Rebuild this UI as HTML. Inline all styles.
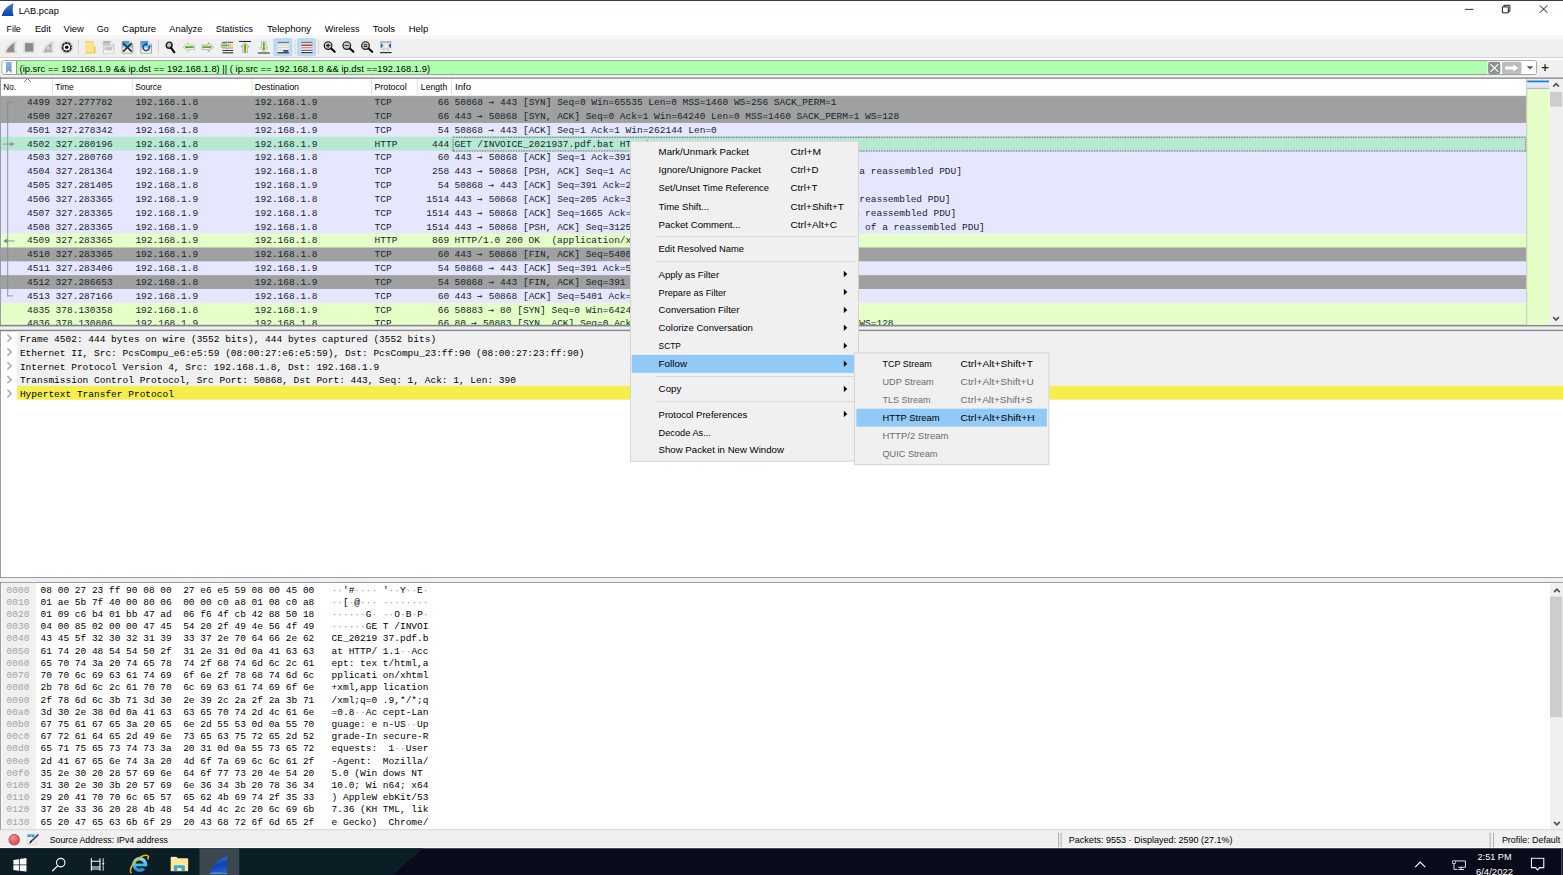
<!DOCTYPE html>
<html lang="en"><head><meta charset="utf-8"><title>LAB.pcap</title>
<style>
html,body{margin:0;padding:0;width:1563px;height:875px;overflow:hidden;background:#f0f0f0}
#r{position:absolute;left:0;top:0;width:1920px;height:1075px;transform:scale(0.81406);transform-origin:0 0;background:#f0f0f0;overflow:hidden;font-family:"Liberation Sans", sans-serif;font-size:12px;color:#000}
#r div{box-sizing:border-box}
</style></head><body><div id="r">
<div style="position:absolute;left:0.00px;top:0.00px;width:1920.00px;height:45.00px;background:#ffffff;"></div>
<div style="position:absolute;left:0.00px;top:0.00px;width:1920.00px;height:1.30px;background:#0a0a2c;"></div>
<svg style="position:absolute;left:2.20px;top:3.00px;" width="17" height="17.5" viewBox="0 0 17 16"><path d="M0.2 15.9 C1.6 9.3 6.6 2.8 14.6 0.2 C13.4 5 13.2 11 14.6 15.9 Z" fill="url(#fg)"/><defs><linearGradient id="fg" x1="0" y1="0" x2="0" y2="1"><stop offset="0" stop-color="#3c7fdc"/><stop offset="1" stop-color="#0a3fa8"/></linearGradient></defs></svg>
<div style="position:absolute;top:4.54px;line-height:17px;font-size:12px;color:#000;white-space:pre;left:23.30px;transform-origin:0 50%;transform:scaleX(0.9464);">LAB.pcap</div>
<svg style="position:absolute;left:1794.00px;top:1.00px;" width="120" height="22" viewBox="0 0 120 22"><path d="M5.5 10.5h10.5" stroke="#000" stroke-width="1" fill="none"/><path d="M51.500 7.500h7.300v7.300h-7.300z M53.500 7.500v-2h7.300v7.300h-2" stroke="#000" stroke-width="1.100" fill="none"/><path d="M97.500 5.500l9.300 9.300M106.800 5.500l-9.300 9.300" stroke="#000" stroke-width="1.100" fill="none"/></svg>
<div style="position:absolute;top:27.04px;line-height:17px;font-size:12px;color:#000;white-space:pre;left:8.35px;transform-origin:0 50%;transform:scaleX(0.9081);">File</div>
<div style="position:absolute;top:27.04px;line-height:17px;font-size:12px;color:#000;white-space:pre;left:42.50px;transform-origin:0 50%;transform:scaleX(0.9382);">Edit</div>
<div style="position:absolute;top:27.04px;line-height:17px;font-size:12px;color:#000;white-space:pre;left:78.13px;transform-origin:0 50%;transform:scaleX(0.9714);">View</div>
<div style="position:absolute;top:27.04px;line-height:17px;font-size:12px;color:#000;white-space:pre;left:119.28px;transform-origin:0 50%;transform:scaleX(0.9204);">Go</div>
<div style="position:absolute;top:27.04px;line-height:17px;font-size:12px;color:#000;white-space:pre;left:150.36px;transform-origin:0 50%;transform:scaleX(0.9809);">Capture</div>
<div style="position:absolute;top:27.04px;line-height:17px;font-size:12px;color:#000;white-space:pre;left:208.34px;transform-origin:0 50%;transform:scaleX(0.9522);">Analyze</div>
<div style="position:absolute;top:27.04px;line-height:17px;font-size:12px;color:#000;white-space:pre;left:265.46px;transform-origin:0 50%;transform:scaleX(0.9517);">Statistics</div>
<div style="position:absolute;top:27.04px;line-height:17px;font-size:12px;color:#000;white-space:pre;left:327.74px;transform-origin:0 50%;transform:scaleX(0.9900);">Telephony</div>
<div style="position:absolute;top:27.04px;line-height:17px;font-size:12px;color:#000;white-space:pre;left:398.50px;transform-origin:0 50%;transform:scaleX(0.9237);">Wireless</div>
<div style="position:absolute;top:27.04px;line-height:17px;font-size:12px;color:#000;white-space:pre;left:457.95px;transform-origin:0 50%;transform:scaleX(0.9734);">Tools</div>
<div style="position:absolute;top:27.04px;line-height:17px;font-size:12px;color:#000;white-space:pre;left:501.93px;transform-origin:0 50%;transform:scaleX(0.9703);">Help</div>
<div style="position:absolute;left:0.00px;top:44.40px;width:1920.00px;height:26.60px;background:#f0f0f0;"></div>
<div style="position:absolute;left:0.00px;top:45.30px;width:1920.00px;height:1.40px;background:#fafafa;"></div>
<div style="position:absolute;left:0.00px;top:69.85px;width:1920.00px;height:1.30px;background:#bfbfbf;"></div>
<div style="position:absolute;left:0.00px;top:71.20px;width:1920.00px;height:2.50px;background:#ffffff;"></div>
<div style="position:absolute;left:336.30px;top:47.00px;width:23.00px;height:22.00px;background:#bcdcf4;border:1px solid #a9d1f5;border-radius:2px;"></div>
<div style="position:absolute;left:365.00px;top:47.00px;width:23.40px;height:22.00px;background:#bcdcf4;border:1px solid #a9d1f5;border-radius:2px;"></div>
<svg style="position:absolute;left:5.20px;top:50.00px;" width="16" height="16" viewBox="0 0 16 16"><path d="M0 15.8 C1.5 9 7 2.6 13.8 0.2 L15.8 0 C14.4 5 14.4 11 15.8 15.8 Z" fill="#dcdcdc"/><path d="M2.6 14.2 C4 9 8 4.6 13 2.4 C12 6 12 10.5 13 14.2 Z" fill="#8c8c8c"/></svg>
<svg style="position:absolute;left:28.00px;top:50.00px;" width="16" height="16" viewBox="0 0 16 16"><rect x="0.8" y="1.2" width="14" height="14" fill="#dcdcdc"/><rect x="2.8" y="3" width="10" height="10.4" fill="#8a8a8a"/></svg>
<svg style="position:absolute;left:51.00px;top:50.00px;" width="16" height="16" viewBox="0 0 16 16"><path d="M0 15.8 C1.5 9 7 2.6 13.8 0.2 L15.8 0 C14.4 5 14.4 11 15.8 15.8 Z" fill="#e2e2e2"/><path d="M2.6 14.2 C4 9 8 4.6 13 2.4 C12 6 12 10.5 13 14.2 Z" fill="#b0b0b0"/><circle cx="8.6" cy="9.4" r="2.6" fill="#eee" stroke="#a8a8a8" stroke-width="1"/><path d="M7.6 9.6l1 1l1.8-3" stroke="#999" stroke-width="0.9" fill="none"/></svg>
<svg style="position:absolute;left:74.00px;top:50.00px;" width="16" height="16" viewBox="0 0 16 16"><circle cx="8" cy="8" r="7.500" fill="#e4e4e4" stroke="#c2c2c2" stroke-width="0.900"/><circle cx="8" cy="8" r="5.200" fill="#fff" stroke="#222" stroke-width="2.300"/><circle cx="8" cy="8" r="5.600" fill="none" stroke="#f2f2f2" stroke-width="1.300" stroke-dasharray="0.900 3.500"/><circle cx="8" cy="8" r="2.200" fill="#0a0a0a"/></svg>
<div style="position:absolute;left:95.80px;top:49.00px;width:1.00px;height:18.00px;background:#d0d0d0;"></div>
<svg style="position:absolute;left:103.40px;top:50.00px;" width="16" height="16" viewBox="0 0 16 16"><path d="M1.6 0.4h10.8v6.8h1.8v8.6h-12.6z" fill="#fde28e"/><path d="M12.4 7.2h1.8v8.6h-12.6v-1.2h11v-7.4z" fill="#f0c648"/><path d="M1.6 0.4h10.8v0.9h-10.8z" fill="#f3cf62"/></svg>
<svg style="position:absolute;left:126.00px;top:50.00px;" width="16" height="16" viewBox="0 0 16 16"><defs><linearGradient id="g6" x1="0" y1="0" x2="0" y2="1"><stop offset="0" stop-color="#a9a9a9"/><stop offset="0.5" stop-color="#e4e4e4"/><stop offset="1" stop-color="#fbfbfb"/></linearGradient></defs><path d="M1 0.4h8.6l4.4 4.4v10.8h-13z" fill="url(#g6)" stroke="#bdbdbd" stroke-width="0.9"/><path d="M9.6 0.4v4.4h4.4z" fill="#f4f4f4"/><path d="M3.2 11.5v-3M5.5 8.5h1.6v3h-1.6zM9 8.5h1.6v3h-1.6z" stroke="#b0b0b0" stroke-width="1.200" fill="none"/></svg>
<svg style="position:absolute;left:149.00px;top:50.00px;" width="16" height="16" viewBox="0 0 16 16"><defs><linearGradient id="g7" x1="0" y1="0" x2="0" y2="1"><stop offset="0" stop-color="#2f9be8"/><stop offset="0.45" stop-color="#7cc0ea"/><stop offset="0.62" stop-color="#f2f3e4"/><stop offset="1" stop-color="#f8f8e8"/></linearGradient></defs><path d="M1 0.5h8.8l4.2 4.2v10.8h-13z" fill="url(#g7)" stroke="#8e8e84" stroke-width="1"/><path d="M9.8 0.5v4.2h4.2z" fill="#e9f2f6"/><path d="M2.2 3l10.6 10.4M12.8 3l-10.6 10.4" stroke="#2c2f33" stroke-width="2.1" fill="none"/></svg>
<svg style="position:absolute;left:172.00px;top:50.00px;" width="16" height="16" viewBox="0 0 16 16"><defs><linearGradient id="g8" x1="0" y1="0" x2="0" y2="1"><stop offset="0" stop-color="#2f9be8"/><stop offset="0.45" stop-color="#7cc0ea"/><stop offset="0.62" stop-color="#f2f3e4"/><stop offset="1" stop-color="#f8f8e8"/></linearGradient></defs><path d="M1 0.5h8.8l4.2 4.2v10.8h-13z" fill="url(#g8)" stroke="#8e8e84" stroke-width="1"/><path d="M9.8 0.5v4.2h4.2z" fill="#e9f2f6"/><path d="M10.8 6.2a3.9 3.9 0 1 1 -3.4 -1.9" stroke="#1c4f9e" stroke-width="2" fill="none"/><path d="M6.6 2l3.4 2.3l-3.4 2.3z" fill="#1c4f9e"/></svg>
<div style="position:absolute;left:194.10px;top:49.00px;width:1.00px;height:18.00px;background:#d0d0d0;"></div>
<svg style="position:absolute;left:201.00px;top:50.00px;" width="16" height="16" viewBox="0 0 16 16"><circle cx="6.800" cy="5.600" r="3.600" fill="#bdbdbd" stroke="#1e1e1e" stroke-width="1.800"/><path d="M5 3.8a2.6 2.6 0 0 1 3.2 0" stroke="#e8e8e8" stroke-width="1" fill="none"/><path d="M9 8.6l4.2 5.6" stroke="#0a0a0a" stroke-width="2.6" stroke-linecap="round"/></svg>
<svg style="position:absolute;left:224.00px;top:50.00px;" width="16" height="16" viewBox="0 0 16 16"><path d="M1 8l6.2-5.6v3h7.6v5.2h-7.6v3z" fill="#fff" stroke="#b4b4b4" stroke-width="1"/><path d="M4.4 8h8.6" stroke="#5fb000" stroke-width="2.2" stroke-linecap="round"/><path d="M3.2 8l3-2.2v4.4z" fill="#5fb000"/></svg>
<svg style="position:absolute;left:247.00px;top:50.00px;" width="16" height="16" viewBox="0 0 16 16"><path d="M15 8l-6.2-5.6v3h-7.6v5.2h7.6v3z" fill="#fff" stroke="#9a9a9a" stroke-width="1"/><path d="M3 8h8.6" stroke="#5fb000" stroke-width="2.2" stroke-linecap="round"/><path d="M12.8 8l-3-2.2v4.4z" fill="#5fb000"/></svg>
<svg style="position:absolute;left:270.50px;top:50.00px;" width="16" height="16" viewBox="0 0 16 16"><path d="M2 2h13.4" stroke="#6b6b6b" stroke-width="1.4"/><path d="M10 4.2h5.4v3.2h-5.4z" fill="#ffe24a"/><path d="M2 9h13.4" stroke="#8a8a8a" stroke-width="1"/><path d="M2.4 12h13M2.4 15h13" stroke="#333" stroke-width="1.4"/><path d="M0.6 3.6h7v-2.4l5 4.6l-5 4.6v-2.4h-7z" fill="#fff" stroke="#8e8e8e" stroke-width="0.9"/><path d="M2.4 5.8h7" stroke="#5fb000" stroke-width="2.2" stroke-linecap="round"/></svg>
<svg style="position:absolute;left:293.00px;top:50.00px;" width="16" height="16" viewBox="0 0 16 16"><path d="M0.6 0.8h14.8" stroke="#2e2e2e" stroke-width="1.4"/><path d="M8 2l5 5.4h-2.2v7.4h-5.6v-7.4h-2.2z" fill="#fff" stroke="#8e8e8e" stroke-width="0.9"/><path d="M8 6v7" stroke="#5fb000" stroke-width="2.4" stroke-linecap="round"/><path d="M8 3.8l2.4 3h-4.8z" fill="#5fb000"/></svg>
<svg style="position:absolute;left:316.00px;top:50.00px;" width="16" height="16" viewBox="0 0 16 16"><path d="M0.6 15.3h14.8" stroke="#2e2e2e" stroke-width="1.4"/><path d="M8 14l5-5.4h-2.2v-7.4h-5.6v7.4h-2.2z" fill="#fff" stroke="#a6a6a6" stroke-width="0.9"/><path d="M8 3v7" stroke="#5fb000" stroke-width="2.4" stroke-linecap="round"/><path d="M8 12.2l2.4-3h-4.8z" fill="#5fb000"/></svg>
<svg style="position:absolute;left:339.70px;top:50.00px;" width="16" height="16" viewBox="0 0 16 16"><rect x="1" y="1.6" width="14" height="13" fill="#f4f4ee"/><path d="M1 2.2h14" stroke="#6d7f96" stroke-width="1.6"/><path d="M1 5.4h14M1 8.4h14M1 11.4h14" stroke="#c9c9c4" stroke-width="1"/><path d="M1 15h14" stroke="#1e1e1e" stroke-width="1.5"/><path d="M7.2 11.4h7.8l-2 3h-3.8z" fill="#2a5ea8"/></svg>
<div style="position:absolute;left:361.50px;top:49.00px;width:1.00px;height:18.00px;background:#d0d0d0;"></div>
<svg style="position:absolute;left:368.60px;top:50.00px;" width="16" height="16" viewBox="0 0 16 16"><rect x="1" y="1.4" width="14" height="14" fill="#f3f4ee"/><path d="M1 2.2h14" stroke="#7e7e7e" stroke-width="1.7"/><path d="M1 5.6h14" stroke="#ee2c2c" stroke-width="1.6"/><path d="M1 8.6h14" stroke="#6f8fc0" stroke-width="1.4"/><path d="M1 11.9h14" stroke="#8a5a96" stroke-width="1.4"/><path d="M1 14.7h14" stroke="#3c3c3c" stroke-width="1.5"/></svg>
<div style="position:absolute;left:391.40px;top:49.00px;width:1.00px;height:18.00px;background:#d0d0d0;"></div>
<svg style="position:absolute;left:397.00px;top:50.00px;" width="16" height="16" viewBox="0 0 16 16"><circle cx="6" cy="6" r="4.7" fill="#c9c9c9" stroke="#1a1a1a" stroke-width="1.5"/><path d="M9.8 9.6l4.4 4" stroke="#0a0a0a" stroke-width="2.6" stroke-linecap="round"/><path d="M6 3.4v5.2M3.4 6h5.2" stroke="#111" stroke-width="1.3"/></svg>
<svg style="position:absolute;left:420.00px;top:50.00px;" width="16" height="16" viewBox="0 0 16 16"><circle cx="6" cy="6" r="4.7" fill="#c9c9c9" stroke="#1a1a1a" stroke-width="1.5"/><path d="M9.8 9.6l4.4 4" stroke="#0a0a0a" stroke-width="2.6" stroke-linecap="round"/><path d="M3.6 6h4.8" stroke="#333" stroke-width="1.3"/></svg>
<svg style="position:absolute;left:443.00px;top:50.00px;" width="16" height="16" viewBox="0 0 16 16"><circle cx="6" cy="6" r="4.7" fill="#c9c9c9" stroke="#1a1a1a" stroke-width="1.5"/><path d="M9.8 9.6l4.4 4" stroke="#0a0a0a" stroke-width="2.6" stroke-linecap="round"/><path d="M3.8 4.9h4.4M3.8 7.1h4.4" stroke="#222" stroke-width="1.3"/></svg>
<svg style="position:absolute;left:466.00px;top:50.00px;" width="16" height="16" viewBox="0 0 16 16"><rect x="1" y="1.5" width="14" height="13" fill="#f4f4ee"/><path d="M1 1.6h14" stroke="#7c7c7c" stroke-width="1.5"/><path d="M1 14.6h14" stroke="#222" stroke-width="1.5"/><path d="M1 10.4h14M5.6 2v12.5M10.4 2v12.5" stroke="#c4c4be" stroke-width="1"/><path d="M1.6 3.2c3.6 0.6 3.6 5.2 0 5.8zM14.4 3.2c-3.6 0.6-3.6 5.2 0 5.8z" fill="#2b62ad"/></svg>
<div style="position:absolute;left:2.00px;top:73.70px;width:1886.00px;height:18.10px;background:#afffaf;border:1px solid #8a8a8a;border-radius:3.5px;background-clip:padding-box;box-shadow:0 0 0 0 #888;"></div>
<div style="position:absolute;left:3.00px;top:75.00px;width:17.50px;height:16.00px;background:#ffffff;border-radius:2.5px 0 0 2.5px;border-right:1px solid #8a8a8a;"></div>
<div style="position:absolute;left:19.80px;top:75.00px;width:1.00px;height:16.00px;background:#8a8a8a;"></div>
<svg style="position:absolute;left:7.30px;top:76.30px;" width="8" height="15" viewBox="0 0 8 15"><defs><linearGradient id="bk" x1="0" y1="0" x2="0" y2="1"><stop offset="0" stop-color="#8ab4e2"/><stop offset="1" stop-color="#6596d2"/></linearGradient></defs><path d="M0.200 0h7.100v14l-3.550-3.300l-3.550 3.300z" fill="url(#bk)"/></svg>
<div style="position:absolute;top:77.09px;line-height:15px;font-size:11px;color:#000;white-space:pre;left:24.32px;transform-origin:0 50%;transform:scaleX(1.0473);">(ip.src == 192.168.1.9 &amp;&amp; ip.dst == 192.168.1.8) || ( ip.src == 192.168.1.8 &amp;&amp; ip.dst ==192.168.1.9)</div>
<div style="position:absolute;left:1827.00px;top:75.00px;width:60.00px;height:16.00px;background:#ffffff;border-radius:0 2px 2px 0;"></div>
<div style="position:absolute;left:1827.50px;top:75.50px;width:15.50px;height:15.00px;background:#8e908c;border-radius:2.5px;"></div>
<svg style="position:absolute;left:1827.50px;top:75.50px;" width="15.5" height="15" viewBox="0 0 15.5 15"><path d="M3 2.8l9.5 9.5M12.5 2.8l-9.5 9.5" stroke="#fff" stroke-width="1.4" fill="none"/></svg>
<div style="position:absolute;left:1845.00px;top:75.50px;width:24.00px;height:15.00px;background:#bcbcbc;border-radius:2px;"></div>
<svg style="position:absolute;left:1845.00px;top:75.50px;" width="24" height="15" viewBox="0 0 24 15"><path d="M4 5.7h10v-2.6l6 4.4l-6 4.4v-2.6h-10z" fill="#fff"/></svg>
<svg style="position:absolute;left:1875.00px;top:80.00px;" width="10" height="6" viewBox="0 0 10 6"><path d="M0.500 1.300h8l-4 4.200z" fill="#555"/></svg>
<svg style="position:absolute;left:1892.00px;top:77.00px;" width="12" height="12" viewBox="0 0 12 12"><path d="M6 2v8.200M1.900 6.100h8.200" stroke="#222" stroke-width="1.600" fill="none"/></svg>
<div style="position:absolute;left:0.00px;top:95.10px;width:1920.00px;height:305.00px;background:#ffffff;"></div>
<div style="position:absolute;top:100.39px;line-height:15px;font-size:11px;color:#000;white-space:pre;left:4.05px;transform-origin:0 50%;transform:scaleX(0.9110);">No.</div>
<div style="position:absolute;top:100.39px;line-height:15px;font-size:11px;color:#000;white-space:pre;left:68.30px;transform-origin:0 50%;transform:scaleX(0.9348);">Time</div>
<div style="position:absolute;top:100.39px;line-height:15px;font-size:11px;color:#000;white-space:pre;left:166.33px;transform-origin:0 50%;transform:scaleX(0.9374);">Source</div>
<div style="position:absolute;top:100.39px;line-height:15px;font-size:11px;color:#000;white-space:pre;left:313.00px;transform-origin:0 50%;transform:scaleX(0.9864);">Destination</div>
<div style="position:absolute;top:100.39px;line-height:15px;font-size:11px;color:#000;white-space:pre;left:460.16px;transform-origin:0 50%;transform:scaleX(0.9801);">Protocol</div>
<div style="position:absolute;top:100.39px;line-height:15px;font-size:11px;color:#000;white-space:pre;left:516.55px;transform-origin:0 50%;transform:scaleX(0.9599);">Length</div>
<div style="position:absolute;top:100.39px;line-height:15px;font-size:11px;color:#000;white-space:pre;left:558.56px;transform-origin:0 50%;transform:scaleX(1.0705);">Info</div>
<div style="position:absolute;left:63.62px;top:96.00px;width:1.00px;height:21.00px;background:#dadada;"></div>
<div style="position:absolute;left:162.14px;top:96.00px;width:1.00px;height:21.00px;background:#dadada;"></div>
<div style="position:absolute;left:309.31px;top:96.00px;width:1.00px;height:21.00px;background:#dadada;"></div>
<div style="position:absolute;left:455.98px;top:96.00px;width:1.00px;height:21.00px;background:#dadada;"></div>
<div style="position:absolute;left:512.36px;top:96.00px;width:1.00px;height:21.00px;background:#dadada;"></div>
<div style="position:absolute;left:554.00px;top:96.00px;width:1.00px;height:21.00px;background:#dadada;"></div>
<svg style="position:absolute;left:29.00px;top:94.50px;" width="10" height="7" viewBox="0 0 10 7"><path d="M0.8 5.6l4-4.2l4 4.2" stroke="#555" stroke-width="1" fill="none"/></svg>
<div style="position:absolute;left:0;top:94px;width:1920px;height:305.5px;overflow:hidden">
<div style="position:absolute;left:1.30px;top:23.45px;width:1873.70px;height:17.70px;background:#a0a0a0;"></div>
<div style="position:absolute;top:24.04px;line-height:16px;font-size:11.68px;color:#12272e;white-space:pre;right:1858.70px;font-family:'Liberation Mono', monospace;">4499</div>
<div style="position:absolute;top:24.04px;line-height:16px;font-size:11.68px;color:#12272e;white-space:pre;left:68.30px;font-family:'Liberation Mono', monospace;">327.277782</div>
<div style="position:absolute;top:24.04px;line-height:16px;font-size:11.68px;color:#12272e;white-space:pre;left:166.33px;font-family:'Liberation Mono', monospace;">192.168.1.8</div>
<div style="position:absolute;top:24.04px;line-height:16px;font-size:11.68px;color:#12272e;white-space:pre;left:313.00px;font-family:'Liberation Mono', monospace;">192.168.1.9</div>
<div style="position:absolute;top:24.04px;line-height:16px;font-size:11.68px;color:#12272e;white-space:pre;left:460.16px;font-family:'Liberation Mono', monospace;">TCP</div>
<div style="position:absolute;top:24.04px;line-height:16px;font-size:11.68px;color:#12272e;white-space:pre;right:1368.32px;font-family:'Liberation Mono', monospace;">66</div>
<div style="position:absolute;top:24.04px;line-height:16px;font-size:11.68px;color:#12272e;white-space:pre;left:558.31px;font-family:'Liberation Mono', monospace;">50868 <span style="display:inline-block;width:1ch;font-family:'DejaVu Sans Mono',monospace;line-height:0;position:relative;top:-0.1px;text-indent:-0.3px">→</span> 443 [SYN] Seq=0 Win=65535 Len=0 MSS=1460 WS=256 SACK_PERM=1</div>
<div style="position:absolute;left:1.30px;top:40.45px;width:1873.70px;height:17.70px;background:#a0a0a0;"></div>
<div style="position:absolute;top:41.04px;line-height:16px;font-size:11.68px;color:#12272e;white-space:pre;right:1858.70px;font-family:'Liberation Mono', monospace;">4500</div>
<div style="position:absolute;top:41.04px;line-height:16px;font-size:11.68px;color:#12272e;white-space:pre;left:68.30px;font-family:'Liberation Mono', monospace;">327.278267</div>
<div style="position:absolute;top:41.04px;line-height:16px;font-size:11.68px;color:#12272e;white-space:pre;left:166.33px;font-family:'Liberation Mono', monospace;">192.168.1.9</div>
<div style="position:absolute;top:41.04px;line-height:16px;font-size:11.68px;color:#12272e;white-space:pre;left:313.00px;font-family:'Liberation Mono', monospace;">192.168.1.8</div>
<div style="position:absolute;top:41.04px;line-height:16px;font-size:11.68px;color:#12272e;white-space:pre;left:460.16px;font-family:'Liberation Mono', monospace;">TCP</div>
<div style="position:absolute;top:41.04px;line-height:16px;font-size:11.68px;color:#12272e;white-space:pre;right:1368.32px;font-family:'Liberation Mono', monospace;">66</div>
<div style="position:absolute;top:41.04px;line-height:16px;font-size:11.68px;color:#12272e;white-space:pre;left:558.31px;font-family:'Liberation Mono', monospace;">443 <span style="display:inline-block;width:1ch;font-family:'DejaVu Sans Mono',monospace;line-height:0;position:relative;top:-0.1px;text-indent:-0.3px">→</span> 50868 [SYN, ACK] Seq=0 Ack=1 Win=64240 Len=0 MSS=1460 SACK_PERM=1 WS=128</div>
<div style="position:absolute;left:1.30px;top:57.45px;width:1873.70px;height:17.70px;background:#e7e6ff;"></div>
<div style="position:absolute;top:58.04px;line-height:16px;font-size:11.68px;color:#12272e;white-space:pre;right:1858.70px;font-family:'Liberation Mono', monospace;">4501</div>
<div style="position:absolute;top:58.04px;line-height:16px;font-size:11.68px;color:#12272e;white-space:pre;left:68.30px;font-family:'Liberation Mono', monospace;">327.278342</div>
<div style="position:absolute;top:58.04px;line-height:16px;font-size:11.68px;color:#12272e;white-space:pre;left:166.33px;font-family:'Liberation Mono', monospace;">192.168.1.8</div>
<div style="position:absolute;top:58.04px;line-height:16px;font-size:11.68px;color:#12272e;white-space:pre;left:313.00px;font-family:'Liberation Mono', monospace;">192.168.1.9</div>
<div style="position:absolute;top:58.04px;line-height:16px;font-size:11.68px;color:#12272e;white-space:pre;left:460.16px;font-family:'Liberation Mono', monospace;">TCP</div>
<div style="position:absolute;top:58.04px;line-height:16px;font-size:11.68px;color:#12272e;white-space:pre;right:1368.32px;font-family:'Liberation Mono', monospace;">54</div>
<div style="position:absolute;top:58.04px;line-height:16px;font-size:11.68px;color:#12272e;white-space:pre;left:558.31px;font-family:'Liberation Mono', monospace;">50868 <span style="display:inline-block;width:1ch;font-family:'DejaVu Sans Mono',monospace;line-height:0;position:relative;top:-0.1px;text-indent:-0.3px">→</span> 443 [ACK] Seq=1 Ack=1 Win=262144 Len=0</div>
<div style="position:absolute;left:1.30px;top:74.45px;width:1873.70px;height:17.70px;background:#b6e8d2;"></div>
<div style="position:absolute;top:75.04px;line-height:16px;font-size:11.68px;color:#12272e;white-space:pre;right:1858.70px;font-family:'Liberation Mono', monospace;">4502</div>
<div style="position:absolute;top:75.04px;line-height:16px;font-size:11.68px;color:#12272e;white-space:pre;left:68.30px;font-family:'Liberation Mono', monospace;">327.280196</div>
<div style="position:absolute;top:75.04px;line-height:16px;font-size:11.68px;color:#12272e;white-space:pre;left:166.33px;font-family:'Liberation Mono', monospace;">192.168.1.8</div>
<div style="position:absolute;top:75.04px;line-height:16px;font-size:11.68px;color:#12272e;white-space:pre;left:313.00px;font-family:'Liberation Mono', monospace;">192.168.1.9</div>
<div style="position:absolute;top:75.04px;line-height:16px;font-size:11.68px;color:#12272e;white-space:pre;left:460.16px;font-family:'Liberation Mono', monospace;">HTTP</div>
<div style="position:absolute;top:75.04px;line-height:16px;font-size:11.68px;color:#12272e;white-space:pre;right:1368.32px;font-family:'Liberation Mono', monospace;">444</div>
<div style="position:absolute;top:75.04px;line-height:16px;font-size:11.68px;color:#12272e;white-space:pre;left:558.31px;font-family:'Liberation Mono', monospace;">GET /INVOICE_2021937.pdf.bat HTTP/1.1 </div>
<div style="position:absolute;left:1.30px;top:91.45px;width:1873.70px;height:17.70px;background:#e7e6ff;"></div>
<div style="position:absolute;top:92.04px;line-height:16px;font-size:11.68px;color:#12272e;white-space:pre;right:1858.70px;font-family:'Liberation Mono', monospace;">4503</div>
<div style="position:absolute;top:92.04px;line-height:16px;font-size:11.68px;color:#12272e;white-space:pre;left:68.30px;font-family:'Liberation Mono', monospace;">327.280760</div>
<div style="position:absolute;top:92.04px;line-height:16px;font-size:11.68px;color:#12272e;white-space:pre;left:166.33px;font-family:'Liberation Mono', monospace;">192.168.1.9</div>
<div style="position:absolute;top:92.04px;line-height:16px;font-size:11.68px;color:#12272e;white-space:pre;left:313.00px;font-family:'Liberation Mono', monospace;">192.168.1.8</div>
<div style="position:absolute;top:92.04px;line-height:16px;font-size:11.68px;color:#12272e;white-space:pre;left:460.16px;font-family:'Liberation Mono', monospace;">TCP</div>
<div style="position:absolute;top:92.04px;line-height:16px;font-size:11.68px;color:#12272e;white-space:pre;right:1368.32px;font-family:'Liberation Mono', monospace;">60</div>
<div style="position:absolute;top:92.04px;line-height:16px;font-size:11.68px;color:#12272e;white-space:pre;left:558.31px;font-family:'Liberation Mono', monospace;">443 <span style="display:inline-block;width:1ch;font-family:'DejaVu Sans Mono',monospace;line-height:0;position:relative;top:-0.1px;text-indent:-0.3px">→</span> 50868 [ACK] Seq=1 Ack=391 Win=64128 Len=0</div>
<div style="position:absolute;left:1.30px;top:108.45px;width:1873.70px;height:17.70px;background:#e7e6ff;"></div>
<div style="position:absolute;top:109.04px;line-height:16px;font-size:11.68px;color:#12272e;white-space:pre;right:1858.70px;font-family:'Liberation Mono', monospace;">4504</div>
<div style="position:absolute;top:109.04px;line-height:16px;font-size:11.68px;color:#12272e;white-space:pre;left:68.30px;font-family:'Liberation Mono', monospace;">327.281364</div>
<div style="position:absolute;top:109.04px;line-height:16px;font-size:11.68px;color:#12272e;white-space:pre;left:166.33px;font-family:'Liberation Mono', monospace;">192.168.1.9</div>
<div style="position:absolute;top:109.04px;line-height:16px;font-size:11.68px;color:#12272e;white-space:pre;left:313.00px;font-family:'Liberation Mono', monospace;">192.168.1.8</div>
<div style="position:absolute;top:109.04px;line-height:16px;font-size:11.68px;color:#12272e;white-space:pre;left:460.16px;font-family:'Liberation Mono', monospace;">TCP</div>
<div style="position:absolute;top:109.04px;line-height:16px;font-size:11.68px;color:#12272e;white-space:pre;right:1368.32px;font-family:'Liberation Mono', monospace;">258</div>
<div style="position:absolute;top:109.04px;line-height:16px;font-size:11.68px;color:#12272e;white-space:pre;left:558.31px;font-family:'Liberation Mono', monospace;">443 <span style="display:inline-block;width:1ch;font-family:'DejaVu Sans Mono',monospace;line-height:0;position:relative;top:-0.1px;text-indent:-0.3px">→</span> 50868 [PSH, ACK] Seq=1 Ack=391 Win=64128 Len=204 [TCP segment of a reassembled PDU]</div>
<div style="position:absolute;left:1.30px;top:125.45px;width:1873.70px;height:17.70px;background:#e7e6ff;"></div>
<div style="position:absolute;top:126.04px;line-height:16px;font-size:11.68px;color:#12272e;white-space:pre;right:1858.70px;font-family:'Liberation Mono', monospace;">4505</div>
<div style="position:absolute;top:126.04px;line-height:16px;font-size:11.68px;color:#12272e;white-space:pre;left:68.30px;font-family:'Liberation Mono', monospace;">327.281405</div>
<div style="position:absolute;top:126.04px;line-height:16px;font-size:11.68px;color:#12272e;white-space:pre;left:166.33px;font-family:'Liberation Mono', monospace;">192.168.1.8</div>
<div style="position:absolute;top:126.04px;line-height:16px;font-size:11.68px;color:#12272e;white-space:pre;left:313.00px;font-family:'Liberation Mono', monospace;">192.168.1.9</div>
<div style="position:absolute;top:126.04px;line-height:16px;font-size:11.68px;color:#12272e;white-space:pre;left:460.16px;font-family:'Liberation Mono', monospace;">TCP</div>
<div style="position:absolute;top:126.04px;line-height:16px;font-size:11.68px;color:#12272e;white-space:pre;right:1368.32px;font-family:'Liberation Mono', monospace;">54</div>
<div style="position:absolute;top:126.04px;line-height:16px;font-size:11.68px;color:#12272e;white-space:pre;left:558.31px;font-family:'Liberation Mono', monospace;">50868 <span style="display:inline-block;width:1ch;font-family:'DejaVu Sans Mono',monospace;line-height:0;position:relative;top:-0.1px;text-indent:-0.3px">→</span> 443 [ACK] Seq=391 Ack=205 Win=261888 Len=0</div>
<div style="position:absolute;left:1.30px;top:142.45px;width:1873.70px;height:17.70px;background:#e7e6ff;"></div>
<div style="position:absolute;top:143.04px;line-height:16px;font-size:11.68px;color:#12272e;white-space:pre;right:1858.70px;font-family:'Liberation Mono', monospace;">4506</div>
<div style="position:absolute;top:143.04px;line-height:16px;font-size:11.68px;color:#12272e;white-space:pre;left:68.30px;font-family:'Liberation Mono', monospace;">327.283365</div>
<div style="position:absolute;top:143.04px;line-height:16px;font-size:11.68px;color:#12272e;white-space:pre;left:166.33px;font-family:'Liberation Mono', monospace;">192.168.1.9</div>
<div style="position:absolute;top:143.04px;line-height:16px;font-size:11.68px;color:#12272e;white-space:pre;left:313.00px;font-family:'Liberation Mono', monospace;">192.168.1.8</div>
<div style="position:absolute;top:143.04px;line-height:16px;font-size:11.68px;color:#12272e;white-space:pre;left:460.16px;font-family:'Liberation Mono', monospace;">TCP</div>
<div style="position:absolute;top:143.04px;line-height:16px;font-size:11.68px;color:#12272e;white-space:pre;right:1368.32px;font-family:'Liberation Mono', monospace;">1514</div>
<div style="position:absolute;top:143.04px;line-height:16px;font-size:11.68px;color:#12272e;white-space:pre;left:558.31px;font-family:'Liberation Mono', monospace;">443 <span style="display:inline-block;width:1ch;font-family:'DejaVu Sans Mono',monospace;line-height:0;position:relative;top:-0.1px;text-indent:-0.3px">→</span> 50868 [ACK] Seq=205 Ack=391 Win=64128 Len=1460 [TCP segment of a reassembled PDU]</div>
<div style="position:absolute;left:1.30px;top:159.45px;width:1873.70px;height:17.70px;background:#e7e6ff;"></div>
<div style="position:absolute;top:160.04px;line-height:16px;font-size:11.68px;color:#12272e;white-space:pre;right:1858.70px;font-family:'Liberation Mono', monospace;">4507</div>
<div style="position:absolute;top:160.04px;line-height:16px;font-size:11.68px;color:#12272e;white-space:pre;left:68.30px;font-family:'Liberation Mono', monospace;">327.283365</div>
<div style="position:absolute;top:160.04px;line-height:16px;font-size:11.68px;color:#12272e;white-space:pre;left:166.33px;font-family:'Liberation Mono', monospace;">192.168.1.9</div>
<div style="position:absolute;top:160.04px;line-height:16px;font-size:11.68px;color:#12272e;white-space:pre;left:313.00px;font-family:'Liberation Mono', monospace;">192.168.1.8</div>
<div style="position:absolute;top:160.04px;line-height:16px;font-size:11.68px;color:#12272e;white-space:pre;left:460.16px;font-family:'Liberation Mono', monospace;">TCP</div>
<div style="position:absolute;top:160.04px;line-height:16px;font-size:11.68px;color:#12272e;white-space:pre;right:1368.32px;font-family:'Liberation Mono', monospace;">1514</div>
<div style="position:absolute;top:160.04px;line-height:16px;font-size:11.68px;color:#12272e;white-space:pre;left:558.31px;font-family:'Liberation Mono', monospace;">443 <span style="display:inline-block;width:1ch;font-family:'DejaVu Sans Mono',monospace;line-height:0;position:relative;top:-0.1px;text-indent:-0.3px">→</span> 50868 [ACK] Seq=1665 Ack=391 Win=64128 Len=1460 [TCP segment of a reassembled PDU]</div>
<div style="position:absolute;left:1.30px;top:176.45px;width:1873.70px;height:17.70px;background:#e7e6ff;"></div>
<div style="position:absolute;top:177.04px;line-height:16px;font-size:11.68px;color:#12272e;white-space:pre;right:1858.70px;font-family:'Liberation Mono', monospace;">4508</div>
<div style="position:absolute;top:177.04px;line-height:16px;font-size:11.68px;color:#12272e;white-space:pre;left:68.30px;font-family:'Liberation Mono', monospace;">327.283365</div>
<div style="position:absolute;top:177.04px;line-height:16px;font-size:11.68px;color:#12272e;white-space:pre;left:166.33px;font-family:'Liberation Mono', monospace;">192.168.1.9</div>
<div style="position:absolute;top:177.04px;line-height:16px;font-size:11.68px;color:#12272e;white-space:pre;left:313.00px;font-family:'Liberation Mono', monospace;">192.168.1.8</div>
<div style="position:absolute;top:177.04px;line-height:16px;font-size:11.68px;color:#12272e;white-space:pre;left:460.16px;font-family:'Liberation Mono', monospace;">TCP</div>
<div style="position:absolute;top:177.04px;line-height:16px;font-size:11.68px;color:#12272e;white-space:pre;right:1368.32px;font-family:'Liberation Mono', monospace;">1514</div>
<div style="position:absolute;top:177.04px;line-height:16px;font-size:11.68px;color:#12272e;white-space:pre;left:558.31px;font-family:'Liberation Mono', monospace;">443 <span style="display:inline-block;width:1ch;font-family:'DejaVu Sans Mono',monospace;line-height:0;position:relative;top:-0.1px;text-indent:-0.3px">→</span> 50868 [PSH, ACK] Seq=3125 Ack=391 Win=64128 Len=1460 [TCP segment of a reassembled PDU]</div>
<div style="position:absolute;left:1.30px;top:193.45px;width:1873.70px;height:17.70px;background:#e4ffc7;"></div>
<div style="position:absolute;top:194.04px;line-height:16px;font-size:11.68px;color:#12272e;white-space:pre;right:1858.70px;font-family:'Liberation Mono', monospace;">4509</div>
<div style="position:absolute;top:194.04px;line-height:16px;font-size:11.68px;color:#12272e;white-space:pre;left:68.30px;font-family:'Liberation Mono', monospace;">327.283365</div>
<div style="position:absolute;top:194.04px;line-height:16px;font-size:11.68px;color:#12272e;white-space:pre;left:166.33px;font-family:'Liberation Mono', monospace;">192.168.1.9</div>
<div style="position:absolute;top:194.04px;line-height:16px;font-size:11.68px;color:#12272e;white-space:pre;left:313.00px;font-family:'Liberation Mono', monospace;">192.168.1.8</div>
<div style="position:absolute;top:194.04px;line-height:16px;font-size:11.68px;color:#12272e;white-space:pre;left:460.16px;font-family:'Liberation Mono', monospace;">HTTP</div>
<div style="position:absolute;top:194.04px;line-height:16px;font-size:11.68px;color:#12272e;white-space:pre;right:1368.32px;font-family:'Liberation Mono', monospace;">869</div>
<div style="position:absolute;top:194.04px;line-height:16px;font-size:11.68px;color:#12272e;white-space:pre;left:558.31px;font-family:'Liberation Mono', monospace;">HTTP/1.0 200 OK  (application/x-msdos-program)</div>
<div style="position:absolute;left:1.30px;top:210.45px;width:1873.70px;height:17.70px;background:#a0a0a0;"></div>
<div style="position:absolute;top:211.04px;line-height:16px;font-size:11.68px;color:#12272e;white-space:pre;right:1858.70px;font-family:'Liberation Mono', monospace;">4510</div>
<div style="position:absolute;top:211.04px;line-height:16px;font-size:11.68px;color:#12272e;white-space:pre;left:68.30px;font-family:'Liberation Mono', monospace;">327.283365</div>
<div style="position:absolute;top:211.04px;line-height:16px;font-size:11.68px;color:#12272e;white-space:pre;left:166.33px;font-family:'Liberation Mono', monospace;">192.168.1.9</div>
<div style="position:absolute;top:211.04px;line-height:16px;font-size:11.68px;color:#12272e;white-space:pre;left:313.00px;font-family:'Liberation Mono', monospace;">192.168.1.8</div>
<div style="position:absolute;top:211.04px;line-height:16px;font-size:11.68px;color:#12272e;white-space:pre;left:460.16px;font-family:'Liberation Mono', monospace;">TCP</div>
<div style="position:absolute;top:211.04px;line-height:16px;font-size:11.68px;color:#12272e;white-space:pre;right:1368.32px;font-family:'Liberation Mono', monospace;">60</div>
<div style="position:absolute;top:211.04px;line-height:16px;font-size:11.68px;color:#12272e;white-space:pre;left:558.31px;font-family:'Liberation Mono', monospace;">443 <span style="display:inline-block;width:1ch;font-family:'DejaVu Sans Mono',monospace;line-height:0;position:relative;top:-0.1px;text-indent:-0.3px">→</span> 50868 [FIN, ACK] Seq=5400 Ack=391 Win=64128 Len=0</div>
<div style="position:absolute;left:1.30px;top:227.45px;width:1873.70px;height:17.70px;background:#e7e6ff;"></div>
<div style="position:absolute;top:228.04px;line-height:16px;font-size:11.68px;color:#12272e;white-space:pre;right:1858.70px;font-family:'Liberation Mono', monospace;">4511</div>
<div style="position:absolute;top:228.04px;line-height:16px;font-size:11.68px;color:#12272e;white-space:pre;left:68.30px;font-family:'Liberation Mono', monospace;">327.283406</div>
<div style="position:absolute;top:228.04px;line-height:16px;font-size:11.68px;color:#12272e;white-space:pre;left:166.33px;font-family:'Liberation Mono', monospace;">192.168.1.8</div>
<div style="position:absolute;top:228.04px;line-height:16px;font-size:11.68px;color:#12272e;white-space:pre;left:313.00px;font-family:'Liberation Mono', monospace;">192.168.1.9</div>
<div style="position:absolute;top:228.04px;line-height:16px;font-size:11.68px;color:#12272e;white-space:pre;left:460.16px;font-family:'Liberation Mono', monospace;">TCP</div>
<div style="position:absolute;top:228.04px;line-height:16px;font-size:11.68px;color:#12272e;white-space:pre;right:1368.32px;font-family:'Liberation Mono', monospace;">54</div>
<div style="position:absolute;top:228.04px;line-height:16px;font-size:11.68px;color:#12272e;white-space:pre;left:558.31px;font-family:'Liberation Mono', monospace;">50868 <span style="display:inline-block;width:1ch;font-family:'DejaVu Sans Mono',monospace;line-height:0;position:relative;top:-0.1px;text-indent:-0.3px">→</span> 443 [ACK] Seq=391 Ack=5401 Win=262144 Len=0</div>
<div style="position:absolute;left:1.30px;top:244.45px;width:1873.70px;height:17.70px;background:#a0a0a0;"></div>
<div style="position:absolute;top:245.04px;line-height:16px;font-size:11.68px;color:#12272e;white-space:pre;right:1858.70px;font-family:'Liberation Mono', monospace;">4512</div>
<div style="position:absolute;top:245.04px;line-height:16px;font-size:11.68px;color:#12272e;white-space:pre;left:68.30px;font-family:'Liberation Mono', monospace;">327.286653</div>
<div style="position:absolute;top:245.04px;line-height:16px;font-size:11.68px;color:#12272e;white-space:pre;left:166.33px;font-family:'Liberation Mono', monospace;">192.168.1.8</div>
<div style="position:absolute;top:245.04px;line-height:16px;font-size:11.68px;color:#12272e;white-space:pre;left:313.00px;font-family:'Liberation Mono', monospace;">192.168.1.9</div>
<div style="position:absolute;top:245.04px;line-height:16px;font-size:11.68px;color:#12272e;white-space:pre;left:460.16px;font-family:'Liberation Mono', monospace;">TCP</div>
<div style="position:absolute;top:245.04px;line-height:16px;font-size:11.68px;color:#12272e;white-space:pre;right:1368.32px;font-family:'Liberation Mono', monospace;">54</div>
<div style="position:absolute;top:245.04px;line-height:16px;font-size:11.68px;color:#12272e;white-space:pre;left:558.31px;font-family:'Liberation Mono', monospace;">50868 <span style="display:inline-block;width:1ch;font-family:'DejaVu Sans Mono',monospace;line-height:0;position:relative;top:-0.1px;text-indent:-0.3px">→</span> 443 [FIN, ACK] Seq=391 Ack=5401 Win=262144 Len=0</div>
<div style="position:absolute;left:1.30px;top:261.45px;width:1873.70px;height:17.70px;background:#e7e6ff;"></div>
<div style="position:absolute;top:262.04px;line-height:16px;font-size:11.68px;color:#12272e;white-space:pre;right:1858.70px;font-family:'Liberation Mono', monospace;">4513</div>
<div style="position:absolute;top:262.04px;line-height:16px;font-size:11.68px;color:#12272e;white-space:pre;left:68.30px;font-family:'Liberation Mono', monospace;">327.287166</div>
<div style="position:absolute;top:262.04px;line-height:16px;font-size:11.68px;color:#12272e;white-space:pre;left:166.33px;font-family:'Liberation Mono', monospace;">192.168.1.9</div>
<div style="position:absolute;top:262.04px;line-height:16px;font-size:11.68px;color:#12272e;white-space:pre;left:313.00px;font-family:'Liberation Mono', monospace;">192.168.1.8</div>
<div style="position:absolute;top:262.04px;line-height:16px;font-size:11.68px;color:#12272e;white-space:pre;left:460.16px;font-family:'Liberation Mono', monospace;">TCP</div>
<div style="position:absolute;top:262.04px;line-height:16px;font-size:11.68px;color:#12272e;white-space:pre;right:1368.32px;font-family:'Liberation Mono', monospace;">60</div>
<div style="position:absolute;top:262.04px;line-height:16px;font-size:11.68px;color:#12272e;white-space:pre;left:558.31px;font-family:'Liberation Mono', monospace;">443 <span style="display:inline-block;width:1ch;font-family:'DejaVu Sans Mono',monospace;line-height:0;position:relative;top:-0.1px;text-indent:-0.3px">→</span> 50868 [ACK] Seq=5401 Ack=392 Win=64128 Len=0</div>
<div style="position:absolute;left:1.30px;top:278.45px;width:1873.70px;height:17.70px;background:#e4ffc7;"></div>
<div style="position:absolute;top:279.04px;line-height:16px;font-size:11.68px;color:#12272e;white-space:pre;right:1858.70px;font-family:'Liberation Mono', monospace;">4835</div>
<div style="position:absolute;top:279.04px;line-height:16px;font-size:11.68px;color:#12272e;white-space:pre;left:68.30px;font-family:'Liberation Mono', monospace;">378.130358</div>
<div style="position:absolute;top:279.04px;line-height:16px;font-size:11.68px;color:#12272e;white-space:pre;left:166.33px;font-family:'Liberation Mono', monospace;">192.168.1.8</div>
<div style="position:absolute;top:279.04px;line-height:16px;font-size:11.68px;color:#12272e;white-space:pre;left:313.00px;font-family:'Liberation Mono', monospace;">192.168.1.9</div>
<div style="position:absolute;top:279.04px;line-height:16px;font-size:11.68px;color:#12272e;white-space:pre;left:460.16px;font-family:'Liberation Mono', monospace;">TCP</div>
<div style="position:absolute;top:279.04px;line-height:16px;font-size:11.68px;color:#12272e;white-space:pre;right:1368.32px;font-family:'Liberation Mono', monospace;">66</div>
<div style="position:absolute;top:279.04px;line-height:16px;font-size:11.68px;color:#12272e;white-space:pre;left:558.31px;font-family:'Liberation Mono', monospace;">50883 <span style="display:inline-block;width:1ch;font-family:'DejaVu Sans Mono',monospace;line-height:0;position:relative;top:-0.1px;text-indent:-0.3px">→</span> 80 [SYN] Seq=0 Win=64240 Len=0 MSS=1460 WS=256 SACK_PERM=1</div>
<div style="position:absolute;left:1.30px;top:295.45px;width:1873.70px;height:17.70px;background:#e4ffc7;"></div>
<div style="position:absolute;top:296.04px;line-height:16px;font-size:11.68px;color:#12272e;white-space:pre;right:1858.70px;font-family:'Liberation Mono', monospace;">4836</div>
<div style="position:absolute;top:296.04px;line-height:16px;font-size:11.68px;color:#12272e;white-space:pre;left:68.30px;font-family:'Liberation Mono', monospace;">378.130806</div>
<div style="position:absolute;top:296.04px;line-height:16px;font-size:11.68px;color:#12272e;white-space:pre;left:166.33px;font-family:'Liberation Mono', monospace;">192.168.1.9</div>
<div style="position:absolute;top:296.04px;line-height:16px;font-size:11.68px;color:#12272e;white-space:pre;left:313.00px;font-family:'Liberation Mono', monospace;">192.168.1.8</div>
<div style="position:absolute;top:296.04px;line-height:16px;font-size:11.68px;color:#12272e;white-space:pre;left:460.16px;font-family:'Liberation Mono', monospace;">TCP</div>
<div style="position:absolute;top:296.04px;line-height:16px;font-size:11.68px;color:#12272e;white-space:pre;right:1368.32px;font-family:'Liberation Mono', monospace;">66</div>
<div style="position:absolute;top:296.04px;line-height:16px;font-size:11.68px;color:#12272e;white-space:pre;left:558.31px;font-family:'Liberation Mono', monospace;">80 <span style="display:inline-block;width:1ch;font-family:'DejaVu Sans Mono',monospace;line-height:0;position:relative;top:-0.1px;text-indent:-0.3px">→</span> 50883 [SYN, ACK] Seq=0 Ack=1 Win=64240 Len=0 MSS=1460 SACK_PERM=1 WS=128</div>
<div style="position:absolute;left:555.61px;top:74.15px;width:1319.39px;height:17.60px;border:1px dotted #222;"></div>
<div style="position:absolute;left:8.59px;top:31.75px;width:1.00px;height:238.00px;background:#7a8a94;"></div>
<div style="position:absolute;left:8.59px;top:31.25px;width:7.86px;height:1.00px;background:#7a8a94;"></div>
<div style="position:absolute;left:8.59px;top:269.25px;width:7.86px;height:1.00px;background:#7a8a94;"></div>
<svg style="position:absolute;left:2.50px;top:79.05px;" width="16" height="8" viewBox="0 0 16 8"><path d="M0.5 4h10" stroke="#8a9494" stroke-width="1.1"/><path d="M10 1l5 3l-5 3z" fill="#8a9494"/></svg>
<svg style="position:absolute;left:2.50px;top:198.05px;" width="16" height="8" viewBox="0 0 16 8"><path d="M5 4h10" stroke="#7a8a8a" stroke-width="1.1"/><path d="M6 1l-5 3l5 3z" fill="#7a8a8a"/></svg>
</div>
<div style="position:absolute;left:1.30px;top:116.50px;width:1873.70px;height:1.50px;background:#ffffff;"></div>
<div style="position:absolute;left:0.00px;top:94.00px;width:1.30px;height:306.00px;background:#82878f;"></div>
<div style="position:absolute;left:0.00px;top:399.30px;width:1920.00px;height:1.23px;background:#82878f;"></div>
<div style="position:absolute;left:1875.40px;top:95.30px;width:27.30px;height:304.00px;background:#e4ffc7;border-left:1px solid #b9bcb4;"></div>
<div style="position:absolute;left:1876.40px;top:95.30px;width:26.30px;height:15.20px;background:#e7e6ff;"></div>
<div style="position:absolute;left:1876.40px;top:97.60px;width:26.30px;height:1.60px;background:#e4ffc7;"></div>
<div style="position:absolute;left:1876.40px;top:99.30px;width:26.30px;height:2.00px;background:#1178dc;"></div>
<div style="position:absolute;left:1876.40px;top:105.80px;width:26.30px;height:1.00px;background:#d4ecc0;"></div>
<div style="position:absolute;left:1876.40px;top:107.50px;width:26.30px;height:1.30px;background:#a9a9b0;"></div>
<div style="position:absolute;left:1903.00px;top:95.30px;width:17.00px;height:304.00px;background:#f0f0f0;"></div>
<svg style="position:absolute;left:1903.00px;top:96.00px;" width="17" height="17" viewBox="0 0 17 17"><path d="M5 10.4l3.500-3.600l3.500 3.600" stroke="#505050" stroke-width="1.900" fill="none"/></svg>
<div style="position:absolute;left:1904.20px;top:113.10px;width:14.60px;height:18.10px;background:#cdcdcd;"></div>
<svg style="position:absolute;left:1903.00px;top:383.00px;" width="17" height="17" viewBox="0 0 17 17"><path d="M5 6.600l3.500 3.600l3.500-3.600" stroke="#505050" stroke-width="1.900" fill="none"/></svg>
<div style="position:absolute;left:0.00px;top:94.80px;width:1920.00px;height:1.80px;background:#9a9a9a;"></div>
<div style="position:absolute;left:0.00px;top:405.45px;width:1920.00px;height:304.45px;background:#ffffff;"></div>
<div style="position:absolute;left:0.00px;top:405.44px;width:1920.00px;height:1.23px;background:#82878f;"></div>
<div style="position:absolute;left:0.00px;top:708.67px;width:1920.00px;height:1.23px;background:#82878f;"></div>
<div style="position:absolute;left:0.00px;top:405.45px;width:1.40px;height:304.45px;background:#82878f;"></div>
<div style="position:absolute;left:20.88px;top:406.90px;width:1899.12px;height:67.34px;background:#f0f0f0;"></div>
<div style="position:absolute;top:408.79px;line-height:16px;font-size:11.68px;color:#000;white-space:pre;left:24.45px;font-family:'Liberation Mono', monospace;">Frame 4502: 444 bytes on wire (3552 bits), 444 bytes captured (3552 bits)</div>
<svg style="position:absolute;left:7.62px;top:410.30px;" width="8" height="11" viewBox="0 0 8 11"><path d="M1.100 0.900l4.700 4.500l-4.700 4.500" stroke="#a2a2a2" stroke-width="1.700" fill="none"/></svg>
<div style="position:absolute;top:425.73px;line-height:16px;font-size:11.68px;color:#000;white-space:pre;left:24.45px;font-family:'Liberation Mono', monospace;">Ethernet II, Src: PcsCompu_e6:e5:59 (08:00:27:e6:e5:59), Dst: PcsCompu_23:ff:90 (08:00:27:23:ff:90)</div>
<svg style="position:absolute;left:7.62px;top:427.24px;" width="8" height="11" viewBox="0 0 8 11"><path d="M1.100 0.900l4.700 4.500l-4.700 4.500" stroke="#a2a2a2" stroke-width="1.700" fill="none"/></svg>
<div style="position:absolute;top:442.67px;line-height:16px;font-size:11.68px;color:#000;white-space:pre;left:24.45px;font-family:'Liberation Mono', monospace;">Internet Protocol Version 4, Src: 192.168.1.8, Dst: 192.168.1.9</div>
<svg style="position:absolute;left:7.62px;top:444.18px;" width="8" height="11" viewBox="0 0 8 11"><path d="M1.100 0.900l4.700 4.500l-4.700 4.500" stroke="#a2a2a2" stroke-width="1.700" fill="none"/></svg>
<div style="position:absolute;top:459.61px;line-height:16px;font-size:11.68px;color:#000;white-space:pre;left:24.45px;font-family:'Liberation Mono', monospace;">Transmission Control Protocol, Src Port: 50868, Dst Port: 443, Seq: 1, Ack: 1, Len: 390</div>
<svg style="position:absolute;left:7.62px;top:461.12px;" width="8" height="11" viewBox="0 0 8 11"><path d="M1.100 0.900l4.700 4.500l-4.700 4.500" stroke="#a2a2a2" stroke-width="1.700" fill="none"/></svg>
<div style="position:absolute;left:20.88px;top:474.04px;width:1899.12px;height:17.32px;background:#f5ef4e;"></div>
<div style="position:absolute;top:476.55px;line-height:16px;font-size:11.68px;color:#000;white-space:pre;left:24.45px;font-family:'Liberation Mono', monospace;">Hypertext Transfer Protocol</div>
<svg style="position:absolute;left:7.62px;top:478.06px;" width="8" height="11" viewBox="0 0 8 11"><path d="M1.100 0.900l4.700 4.500l-4.700 4.500" stroke="#a2a2a2" stroke-width="1.700" fill="none"/></svg>
<div style="position:absolute;left:0.00px;top:715.00px;width:1920.00px;height:305.10px;background:#ffffff;"></div>
<div style="position:absolute;left:0.00px;top:714.81px;width:1920.00px;height:1.23px;background:#82878f;"></div>
<div style="position:absolute;left:0.00px;top:715.00px;width:1.40px;height:305.10px;background:#82878f;"></div>
<div style="position:absolute;left:2.00px;top:716.30px;width:41.50px;height:302.40px;background:#f0f0f0;"></div>
<div style="position:absolute;top:716.69px;line-height:16px;font-size:11.68px;color:#a3a3a3;white-space:pre;left:8.11px;font-family:'Liberation Mono', monospace;">0000</div>
<div style="position:absolute;top:716.69px;line-height:16px;font-size:11.68px;color:#000;white-space:pre;left:49.87px;font-family:'Liberation Mono', monospace;">08 00 27 23 ff 90 08 00  27 e6 e5 59 08 00 45 00</div>
<div style="position:absolute;top:716.69px;line-height:16px;font-size:11.68px;color:#000;white-space:pre;left:407.28px;font-family:'Liberation Mono', monospace;"><span style="color:#9a9a9a">··</span>'#<span style="color:#9a9a9a">····</span> '<span style="color:#9a9a9a">··</span>Y<span style="color:#9a9a9a">··</span>E<span style="color:#9a9a9a">·</span></div>
<div style="position:absolute;top:731.69px;line-height:16px;font-size:11.68px;color:#a3a3a3;white-space:pre;left:8.11px;font-family:'Liberation Mono', monospace;">0010</div>
<div style="position:absolute;top:731.69px;line-height:16px;font-size:11.68px;color:#000;white-space:pre;left:49.87px;font-family:'Liberation Mono', monospace;">01 ae 5b 7f 40 00 80 06  00 00 c0 a8 01 08 c0 a8</div>
<div style="position:absolute;top:731.69px;line-height:16px;font-size:11.68px;color:#000;white-space:pre;left:407.28px;font-family:'Liberation Mono', monospace;"><span style="color:#9a9a9a">··</span>[<span style="color:#9a9a9a">·</span>@<span style="color:#9a9a9a">···</span> <span style="color:#9a9a9a">········</span></div>
<div style="position:absolute;top:746.69px;line-height:16px;font-size:11.68px;color:#a3a3a3;white-space:pre;left:8.11px;font-family:'Liberation Mono', monospace;">0020</div>
<div style="position:absolute;top:746.69px;line-height:16px;font-size:11.68px;color:#000;white-space:pre;left:49.87px;font-family:'Liberation Mono', monospace;">01 09 c6 b4 01 bb 47 ad  06 f6 4f cb 42 88 50 18</div>
<div style="position:absolute;top:746.69px;line-height:16px;font-size:11.68px;color:#000;white-space:pre;left:407.28px;font-family:'Liberation Mono', monospace;"><span style="color:#9a9a9a">······</span>G<span style="color:#9a9a9a">·</span> <span style="color:#9a9a9a">··</span>O<span style="color:#9a9a9a">·</span>B<span style="color:#9a9a9a">·</span>P<span style="color:#9a9a9a">·</span></div>
<div style="position:absolute;top:761.69px;line-height:16px;font-size:11.68px;color:#a3a3a3;white-space:pre;left:8.11px;font-family:'Liberation Mono', monospace;">0030</div>
<div style="position:absolute;top:761.69px;line-height:16px;font-size:11.68px;color:#000;white-space:pre;left:49.87px;font-family:'Liberation Mono', monospace;">04 00 85 02 00 00 47 45  54 20 2f 49 4e 56 4f 49</div>
<div style="position:absolute;top:761.69px;line-height:16px;font-size:11.68px;color:#000;white-space:pre;left:407.28px;font-family:'Liberation Mono', monospace;"><span style="color:#9a9a9a">······</span>GE T /INVOI</div>
<div style="position:absolute;top:776.69px;line-height:16px;font-size:11.68px;color:#a3a3a3;white-space:pre;left:8.11px;font-family:'Liberation Mono', monospace;">0040</div>
<div style="position:absolute;top:776.69px;line-height:16px;font-size:11.68px;color:#000;white-space:pre;left:49.87px;font-family:'Liberation Mono', monospace;">43 45 5f 32 30 32 31 39  33 37 2e 70 64 66 2e 62</div>
<div style="position:absolute;top:776.69px;line-height:16px;font-size:11.68px;color:#000;white-space:pre;left:407.28px;font-family:'Liberation Mono', monospace;">CE_20219 37.pdf.b</div>
<div style="position:absolute;top:791.69px;line-height:16px;font-size:11.68px;color:#a3a3a3;white-space:pre;left:8.11px;font-family:'Liberation Mono', monospace;">0050</div>
<div style="position:absolute;top:791.69px;line-height:16px;font-size:11.68px;color:#000;white-space:pre;left:49.87px;font-family:'Liberation Mono', monospace;">61 74 20 48 54 54 50 2f  31 2e 31 0d 0a 41 63 63</div>
<div style="position:absolute;top:791.69px;line-height:16px;font-size:11.68px;color:#000;white-space:pre;left:407.28px;font-family:'Liberation Mono', monospace;">at HTTP/ 1.1<span style="color:#9a9a9a">··</span>Acc</div>
<div style="position:absolute;top:806.69px;line-height:16px;font-size:11.68px;color:#a3a3a3;white-space:pre;left:8.11px;font-family:'Liberation Mono', monospace;">0060</div>
<div style="position:absolute;top:806.69px;line-height:16px;font-size:11.68px;color:#000;white-space:pre;left:49.87px;font-family:'Liberation Mono', monospace;">65 70 74 3a 20 74 65 78  74 2f 68 74 6d 6c 2c 61</div>
<div style="position:absolute;top:806.69px;line-height:16px;font-size:11.68px;color:#000;white-space:pre;left:407.28px;font-family:'Liberation Mono', monospace;">ept: tex t/html,a</div>
<div style="position:absolute;top:821.69px;line-height:16px;font-size:11.68px;color:#a3a3a3;white-space:pre;left:8.11px;font-family:'Liberation Mono', monospace;">0070</div>
<div style="position:absolute;top:821.69px;line-height:16px;font-size:11.68px;color:#000;white-space:pre;left:49.87px;font-family:'Liberation Mono', monospace;">70 70 6c 69 63 61 74 69  6f 6e 2f 78 68 74 6d 6c</div>
<div style="position:absolute;top:821.69px;line-height:16px;font-size:11.68px;color:#000;white-space:pre;left:407.28px;font-family:'Liberation Mono', monospace;">pplicati on/xhtml</div>
<div style="position:absolute;top:836.69px;line-height:16px;font-size:11.68px;color:#a3a3a3;white-space:pre;left:8.11px;font-family:'Liberation Mono', monospace;">0080</div>
<div style="position:absolute;top:836.69px;line-height:16px;font-size:11.68px;color:#000;white-space:pre;left:49.87px;font-family:'Liberation Mono', monospace;">2b 78 6d 6c 2c 61 70 70  6c 69 63 61 74 69 6f 6e</div>
<div style="position:absolute;top:836.69px;line-height:16px;font-size:11.68px;color:#000;white-space:pre;left:407.28px;font-family:'Liberation Mono', monospace;">+xml,app lication</div>
<div style="position:absolute;top:851.69px;line-height:16px;font-size:11.68px;color:#a3a3a3;white-space:pre;left:8.11px;font-family:'Liberation Mono', monospace;">0090</div>
<div style="position:absolute;top:851.69px;line-height:16px;font-size:11.68px;color:#000;white-space:pre;left:49.87px;font-family:'Liberation Mono', monospace;">2f 78 6d 6c 3b 71 3d 30  2e 39 2c 2a 2f 2a 3b 71</div>
<div style="position:absolute;top:851.69px;line-height:16px;font-size:11.68px;color:#000;white-space:pre;left:407.28px;font-family:'Liberation Mono', monospace;">/xml;q=0 .9,*/*;q</div>
<div style="position:absolute;top:866.69px;line-height:16px;font-size:11.68px;color:#a3a3a3;white-space:pre;left:8.11px;font-family:'Liberation Mono', monospace;">00a0</div>
<div style="position:absolute;top:866.69px;line-height:16px;font-size:11.68px;color:#000;white-space:pre;left:49.87px;font-family:'Liberation Mono', monospace;">3d 30 2e 38 0d 0a 41 63  63 65 70 74 2d 4c 61 6e</div>
<div style="position:absolute;top:866.69px;line-height:16px;font-size:11.68px;color:#000;white-space:pre;left:407.28px;font-family:'Liberation Mono', monospace;">=0.8<span style="color:#9a9a9a">··</span>Ac cept-Lan</div>
<div style="position:absolute;top:881.69px;line-height:16px;font-size:11.68px;color:#a3a3a3;white-space:pre;left:8.11px;font-family:'Liberation Mono', monospace;">00b0</div>
<div style="position:absolute;top:881.69px;line-height:16px;font-size:11.68px;color:#000;white-space:pre;left:49.87px;font-family:'Liberation Mono', monospace;">67 75 61 67 65 3a 20 65  6e 2d 55 53 0d 0a 55 70</div>
<div style="position:absolute;top:881.69px;line-height:16px;font-size:11.68px;color:#000;white-space:pre;left:407.28px;font-family:'Liberation Mono', monospace;">guage: e n-US<span style="color:#9a9a9a">··</span>Up</div>
<div style="position:absolute;top:896.69px;line-height:16px;font-size:11.68px;color:#a3a3a3;white-space:pre;left:8.11px;font-family:'Liberation Mono', monospace;">00c0</div>
<div style="position:absolute;top:896.69px;line-height:16px;font-size:11.68px;color:#000;white-space:pre;left:49.87px;font-family:'Liberation Mono', monospace;">67 72 61 64 65 2d 49 6e  73 65 63 75 72 65 2d 52</div>
<div style="position:absolute;top:896.69px;line-height:16px;font-size:11.68px;color:#000;white-space:pre;left:407.28px;font-family:'Liberation Mono', monospace;">grade-In secure-R</div>
<div style="position:absolute;top:911.69px;line-height:16px;font-size:11.68px;color:#a3a3a3;white-space:pre;left:8.11px;font-family:'Liberation Mono', monospace;">00d0</div>
<div style="position:absolute;top:911.69px;line-height:16px;font-size:11.68px;color:#000;white-space:pre;left:49.87px;font-family:'Liberation Mono', monospace;">65 71 75 65 73 74 73 3a  20 31 0d 0a 55 73 65 72</div>
<div style="position:absolute;top:911.69px;line-height:16px;font-size:11.68px;color:#000;white-space:pre;left:407.28px;font-family:'Liberation Mono', monospace;">equests:  1<span style="color:#9a9a9a">··</span>User</div>
<div style="position:absolute;top:926.69px;line-height:16px;font-size:11.68px;color:#a3a3a3;white-space:pre;left:8.11px;font-family:'Liberation Mono', monospace;">00e0</div>
<div style="position:absolute;top:926.69px;line-height:16px;font-size:11.68px;color:#000;white-space:pre;left:49.87px;font-family:'Liberation Mono', monospace;">2d 41 67 65 6e 74 3a 20  4d 6f 7a 69 6c 6c 61 2f</div>
<div style="position:absolute;top:926.69px;line-height:16px;font-size:11.68px;color:#000;white-space:pre;left:407.28px;font-family:'Liberation Mono', monospace;">-Agent:  Mozilla/</div>
<div style="position:absolute;top:941.69px;line-height:16px;font-size:11.68px;color:#a3a3a3;white-space:pre;left:8.11px;font-family:'Liberation Mono', monospace;">00f0</div>
<div style="position:absolute;top:941.69px;line-height:16px;font-size:11.68px;color:#000;white-space:pre;left:49.87px;font-family:'Liberation Mono', monospace;">35 2e 30 20 28 57 69 6e  64 6f 77 73 20 4e 54 20</div>
<div style="position:absolute;top:941.69px;line-height:16px;font-size:11.68px;color:#000;white-space:pre;left:407.28px;font-family:'Liberation Mono', monospace;">5.0 (Win dows NT </div>
<div style="position:absolute;top:956.69px;line-height:16px;font-size:11.68px;color:#a3a3a3;white-space:pre;left:8.11px;font-family:'Liberation Mono', monospace;">0100</div>
<div style="position:absolute;top:956.69px;line-height:16px;font-size:11.68px;color:#000;white-space:pre;left:49.87px;font-family:'Liberation Mono', monospace;">31 30 2e 30 3b 20 57 69  6e 36 34 3b 20 78 36 34</div>
<div style="position:absolute;top:956.69px;line-height:16px;font-size:11.68px;color:#000;white-space:pre;left:407.28px;font-family:'Liberation Mono', monospace;">10.0; Wi n64; x64</div>
<div style="position:absolute;top:971.69px;line-height:16px;font-size:11.68px;color:#a3a3a3;white-space:pre;left:8.11px;font-family:'Liberation Mono', monospace;">0110</div>
<div style="position:absolute;top:971.69px;line-height:16px;font-size:11.68px;color:#000;white-space:pre;left:49.87px;font-family:'Liberation Mono', monospace;">29 20 41 70 70 6c 65 57  65 62 4b 69 74 2f 35 33</div>
<div style="position:absolute;top:971.69px;line-height:16px;font-size:11.68px;color:#000;white-space:pre;left:407.28px;font-family:'Liberation Mono', monospace;">) AppleW ebKit/53</div>
<div style="position:absolute;top:986.69px;line-height:16px;font-size:11.68px;color:#a3a3a3;white-space:pre;left:8.11px;font-family:'Liberation Mono', monospace;">0120</div>
<div style="position:absolute;top:986.69px;line-height:16px;font-size:11.68px;color:#000;white-space:pre;left:49.87px;font-family:'Liberation Mono', monospace;">37 2e 33 36 20 28 4b 48  54 4d 4c 2c 20 6c 69 6b</div>
<div style="position:absolute;top:986.69px;line-height:16px;font-size:11.68px;color:#000;white-space:pre;left:407.28px;font-family:'Liberation Mono', monospace;">7.36 (KH TML, lik</div>
<div style="position:absolute;top:1001.69px;line-height:16px;font-size:11.68px;color:#a3a3a3;white-space:pre;left:8.11px;font-family:'Liberation Mono', monospace;">0130</div>
<div style="position:absolute;top:1001.69px;line-height:16px;font-size:11.68px;color:#000;white-space:pre;left:49.87px;font-family:'Liberation Mono', monospace;">65 20 47 65 63 6b 6f 29  20 43 68 72 6f 6d 65 2f</div>
<div style="position:absolute;top:1001.69px;line-height:16px;font-size:11.68px;color:#000;white-space:pre;left:407.28px;font-family:'Liberation Mono', monospace;">e Gecko)  Chrome/</div>
<div style="position:absolute;left:1903.50px;top:716.30px;width:16.50px;height:302.40px;background:#f0f0f0;"></div>
<svg style="position:absolute;left:1903.50px;top:717.00px;" width="17" height="17" viewBox="0 0 17 17"><path d="M5 10.4l3.500-3.600l3.500 3.600" stroke="#505050" stroke-width="1.900" fill="none"/></svg>
<div style="position:absolute;left:1904.30px;top:733.40px;width:14.40px;height:148.10px;background:#cdcdcd;"></div>
<svg style="position:absolute;left:1903.50px;top:1003.00px;" width="17" height="17" viewBox="0 0 17 17"><path d="M5 6.600l3.500 3.600l3.500-3.600" stroke="#505050" stroke-width="1.900" fill="none"/></svg>
<div style="position:absolute;left:0.00px;top:1018.72px;width:1920.00px;height:1.23px;background:#b4b7bd;"></div>
<div style="position:absolute;left:0.00px;top:1020.30px;width:1920.00px;height:22.50px;background:#f0f0f0;"></div>
<div style="position:absolute;left:0.00px;top:1040.70px;width:1920.00px;height:1.50px;background:#ffffff;"></div>
<svg style="position:absolute;left:9.60px;top:1023.60px;" width="15" height="15" viewBox="0 0 15 15"><defs><radialGradient id="rc" cx="0.4" cy="0.3" r="0.8"><stop offset="0" stop-color="#f28f8f"/><stop offset="0.6" stop-color="#e45c5c"/><stop offset="1" stop-color="#d94a4a"/></radialGradient></defs><circle cx="7.500" cy="7.500" r="6.600" fill="url(#rc)" stroke="#b23c3c" stroke-width="0.900"/></svg>
<svg style="position:absolute;left:33.00px;top:1023.60px;" width="15" height="15" viewBox="0 0 15 15"><path d="M0.800 1h10.800v13h-10.800z" fill="#ececea" stroke="#d2d2cf" stroke-width="0.800"/><path d="M0.800 1h8.400v3.200h-8.400z" fill="#2f9ae6"/><path d="M4.600 2.200l0.900 2l0.900-2z" fill="#eef6fc"/><path d="M13.600 1.600l-8.600 8.200" stroke="#4a4a4a" stroke-width="2.100" stroke-linecap="round"/><path d="M5.600 9.200l-1.800 2" stroke="#222" stroke-width="1.600" stroke-linecap="round"/></svg>
<div style="position:absolute;top:1024.59px;line-height:15px;font-size:11px;color:#000;white-space:pre;left:61.42px;transform-origin:0 50%;transform:scaleX(0.9821);">Source Address: IPv4 address</div>
<div style="position:absolute;left:1299.53px;top:1023.30px;width:1.00px;height:17.50px;background:#a0a0a0;"></div>
<div style="position:absolute;left:1303.34px;top:1023.30px;width:1.00px;height:17.50px;background:#a0a0a0;"></div>
<div style="position:absolute;left:1830.08px;top:1023.30px;width:1.00px;height:17.50px;background:#a0a0a0;"></div>
<div style="position:absolute;left:1834.25px;top:1023.30px;width:1.00px;height:17.50px;background:#a0a0a0;"></div>
<div style="position:absolute;top:1024.59px;line-height:15px;font-size:11px;color:#000;white-space:pre;left:1313.17px;transform-origin:0 50%;transform:scaleX(1.0051);">Packets: 9553 · Displayed: 2590 (27.1%)</div>
<div style="position:absolute;top:1024.59px;line-height:15px;font-size:11px;color:#000;white-space:pre;left:1844.70px;transform-origin:0 50%;transform:scaleX(0.9925);">Profile: Default</div>
<div style="position:absolute;left:0.00px;top:1042.10px;width:1920.00px;height:33.90px;background:#0a0b1a;"></div>
<svg style="position:absolute;left:0.00px;top:1042.10px;" width="560" height="33" viewBox="0 0 560 33"><path d="M0 0h520l-38 33h-482z" fill="#0b1d25"/></svg>
<div style="position:absolute;left:245.30px;top:1042.10px;width:48.30px;height:33.00px;background:#3b474e;"></div>
<svg style="position:absolute;left:15.80px;top:1053.60px;" width="17" height="17" viewBox="0 0 16.6 17.4"><path d="M0 2.4l7-1v6.8h-7zM8 1.3l8.6-1.3v8.2h-8.6zM0 9.2h7v6.8l-7-1zM8 9.2h8.6v8.2l-8.6-1.3z" fill="#fff"/></svg>
<svg style="position:absolute;left:62.00px;top:1052.00px;" width="22" height="22" viewBox="0 0 22 22"><circle cx="12.6" cy="7.6" r="5.2" stroke="#fff" stroke-width="1.4" fill="none"/><path d="M9 11.4l-6.8 6.8" stroke="#fff" stroke-width="1.5"/></svg>
<svg style="position:absolute;left:110.00px;top:1053.00px;" width="22" height="20" viewBox="0 0 22 20"><path d="M2.200 1.300v15.400M12.800 1.300v15.400" stroke="#fff" stroke-width="1.300" fill="none"/><path d="M2.200 4.900h10.600M2.200 12h10.600" stroke="#fff" stroke-width="1.300" fill="none"/><path d="M2.200 14.500h10.600" stroke="#fff" stroke-width="1.200" fill="none"/><path d="M16.800 1.300v4.800M16.800 9.800v6.900" stroke="#b8bcc0" stroke-width="1.500"/><circle cx="16.800" cy="7.900" r="1.300" fill="#fff"/></svg>
<svg style="position:absolute;left:159.00px;top:1049.40px;" width="25" height="25" viewBox="0 0 25 25"><defs><linearGradient id="ie" x1="0" y1="0" x2="0" y2="1"><stop offset="0" stop-color="#86e0ff"/><stop offset="0.5" stop-color="#3cb8f2"/><stop offset="1" stop-color="#1e8fd8"/></linearGradient></defs><circle cx="12.6" cy="13" r="7.100" stroke="url(#ie)" stroke-width="4.200" fill="none"/><rect x="6" y="11.800" width="15.800" height="3.400" fill="#45bdf4"/><path d="M14.600 15.300h9.400v3.300l-3.400 0.800l-3.600-1.600z" fill="#0b1d25"/><path d="M2.400 23.600c-3.600-3.200 1.400-13.600 10.400-19.400c4.800-3 9.200-3.600 10.400-1.200c0.500 1-0.100 2.400-0.900 3.800" stroke="#f2b600" stroke-width="1.900" fill="none"/></svg>
<svg style="position:absolute;left:209.00px;top:1052.40px;" width="23" height="19" viewBox="0 0 23 19"><path d="M0.6 1.600q0-1.200 1.200-1.200h6l1.400 2h11.800q1.200 0 1.200 1.200v13.600q0 1.200-1.200 1.200h-19.200q-1.200 0-1.200-1.200z" fill="#ffe795"/><path d="M2 1.600h5.400" stroke="#fff8d8" stroke-width="1.200"/><path d="M4.600 18.400v-6.400q0-1.200 1.200-1.200h11q1.200 0 1.200 1.200v6.400h-4v-4h-5.400v4z" fill="#36a9ee"/></svg>
<svg style="position:absolute;left:257.40px;top:1050.60px;" width="24" height="23" viewBox="0 0 26 25"><defs><linearGradient id="wf" x1="0" y1="0" x2="0.3" y2="1"><stop offset="0" stop-color="#3f86e8"/><stop offset="0.6" stop-color="#0d44b4"/><stop offset="1" stop-color="#1e5fd0"/></linearGradient></defs><path d="M0.6 24.600C2.600 15 11 4.600 24.800 0.600C22.600 8 22.200 17 24 24.600z" fill="url(#wf)"/><path d="M0.800 23.400c6-1.800 15-1.600 23 0.200l0.200 1.200h-23.400z" fill="#5b96f0" opacity="0.75"/></svg>
<svg style="position:absolute;left:1737.00px;top:1057.00px;" width="16" height="10" viewBox="0 0 16 10"><path d="M1.400 8.200l6.200-6.200l6.200 6.200" stroke="#fff" stroke-width="1.400" fill="none"/></svg>
<svg style="position:absolute;left:1783.20px;top:1056.00px;" width="19" height="14.5" viewBox="0 0 21 16"><path d="M5.600 1.800h13.400v8.600h-9.800" stroke="#fff" stroke-width="1.200" fill="none"/><path d="M13 10.400v2.600M9.400 13.400h7.600" stroke="#fff" stroke-width="1.200"/><rect x="1.600" y="1.600" width="3.600" height="3.600" stroke="#fff" stroke-width="1" fill="none"/><path d="M3.400 5.400v7.800h4.600" stroke="#fff" stroke-width="1.200" fill="none"/></svg>
<div style="position:absolute;top:1044.74px;line-height:17px;font-size:12px;color:#fff;white-space:pre;left:1815.00px;transform-origin:0 50%;transform:scaleX(0.9351);">2:51 PM</div>
<div style="position:absolute;top:1062.74px;line-height:17px;font-size:12px;color:#fff;white-space:pre;left:1812.80px;transform-origin:0 50%;transform:scaleX(0.9782);">6/4/2022</div>
<svg style="position:absolute;left:1879.50px;top:1053.00px;" width="18" height="18" viewBox="0 0 18 18"><path d="M1.200 1.200h15.200v11.600h-5l-2.600 2.800l-2.600-2.800h-5z" stroke="#fff" stroke-width="1.300" fill="none"/></svg>
<div style="position:absolute;left:1917.60px;top:1042.10px;width:1.00px;height:33.00px;background:#6a6a72;"></div>
<div style="position:absolute;left:773.65px;top:172.84px;width:281.06px;height:393.71px;background:#f0f0f0;border:1px solid #cfcfcf;"></div>
<div style="position:absolute;top:179.38px;line-height:17px;font-size:12px;color:#000;white-space:pre;left:808.91px;transform-origin:0 50%;transform:scaleX(0.9923);">Mark/Unmark Packet</div>
<div style="position:absolute;top:179.38px;line-height:17px;font-size:12px;color:#000;white-space:pre;left:971.06px;transform-origin:0 50%;transform:scaleX(1.0503);">Ctrl+M</div>
<div style="position:absolute;top:201.43px;line-height:17px;font-size:12px;color:#000;white-space:pre;left:808.91px;transform-origin:0 50%;transform:scaleX(0.9967);">Ignore/Unignore Packet</div>
<div style="position:absolute;top:201.43px;line-height:17px;font-size:12px;color:#000;white-space:pre;left:971.06px;transform-origin:0 50%;transform:scaleX(1.0015);">Ctrl+D</div>
<div style="position:absolute;top:223.48px;line-height:17px;font-size:12px;color:#000;white-space:pre;left:808.91px;transform-origin:0 50%;transform:scaleX(0.9645);">Set/Unset Time Reference</div>
<div style="position:absolute;top:223.48px;line-height:17px;font-size:12px;color:#000;white-space:pre;left:971.06px;transform-origin:0 50%;transform:scaleX(1.0125);">Ctrl+T</div>
<div style="position:absolute;top:245.53px;line-height:17px;font-size:12px;color:#000;white-space:pre;left:808.91px;transform-origin:0 50%;transform:scaleX(0.9757);">Time Shift...</div>
<div style="position:absolute;top:245.53px;line-height:17px;font-size:12px;color:#000;white-space:pre;left:971.06px;transform-origin:0 50%;transform:scaleX(1.0264);">Ctrl+Shift+T</div>
<div style="position:absolute;top:267.58px;line-height:17px;font-size:12px;color:#000;white-space:pre;left:808.91px;transform-origin:0 50%;transform:scaleX(0.9871);">Packet Comment...</div>
<div style="position:absolute;top:267.58px;line-height:17px;font-size:12px;color:#000;white-space:pre;left:971.06px;transform-origin:0 50%;transform:scaleX(1.0318);">Ctrl+Alt+C</div>
<div style="position:absolute;left:804.61px;top:290.29px;width:247.28px;height:1.10px;background:#d4d4d4;"></div>
<div style="position:absolute;top:298.38px;line-height:17px;font-size:12px;color:#000;white-space:pre;left:808.91px;transform-origin:0 50%;transform:scaleX(0.9601);">Edit Resolved Name</div>
<div style="position:absolute;left:804.61px;top:321.09px;width:247.28px;height:1.10px;background:#d4d4d4;"></div>
<div style="position:absolute;top:329.18px;line-height:17px;font-size:12px;color:#000;white-space:pre;left:808.91px;transform-origin:0 50%;transform:scaleX(0.9775);">Apply as Filter</div>
<svg style="position:absolute;left:1036.04px;top:332.04px;" width="6" height="10" viewBox="0 0 6 10"><path d="M0.500 0.700l4.300 4l-4.300 4z" fill="#0a0a0a"/></svg>
<div style="position:absolute;top:351.23px;line-height:17px;font-size:12px;color:#000;white-space:pre;left:808.91px;transform-origin:0 50%;transform:scaleX(0.9348);">Prepare as Filter</div>
<svg style="position:absolute;left:1036.04px;top:354.09px;" width="6" height="10" viewBox="0 0 6 10"><path d="M0.500 0.700l4.300 4l-4.300 4z" fill="#0a0a0a"/></svg>
<div style="position:absolute;top:373.28px;line-height:17px;font-size:12px;color:#000;white-space:pre;left:808.91px;transform-origin:0 50%;transform:scaleX(0.9855);">Conversation Filter</div>
<svg style="position:absolute;left:1036.04px;top:376.14px;" width="6" height="10" viewBox="0 0 6 10"><path d="M0.500 0.700l4.300 4l-4.300 4z" fill="#0a0a0a"/></svg>
<div style="position:absolute;top:395.33px;line-height:17px;font-size:12px;color:#000;white-space:pre;left:808.91px;transform-origin:0 50%;transform:scaleX(0.9812);">Colorize Conversation</div>
<svg style="position:absolute;left:1036.04px;top:398.19px;" width="6" height="10" viewBox="0 0 6 10"><path d="M0.500 0.700l4.300 4l-4.300 4z" fill="#0a0a0a"/></svg>
<div style="position:absolute;top:417.38px;line-height:17px;font-size:12px;color:#000;white-space:pre;left:808.91px;transform-origin:0 50%;transform:scaleX(0.8556);">SCTP</div>
<svg style="position:absolute;left:1036.04px;top:420.24px;" width="6" height="10" viewBox="0 0 6 10"><path d="M0.500 0.700l4.300 4l-4.300 4z" fill="#0a0a0a"/></svg>
<div style="position:absolute;left:776.36px;top:436.29px;width:272.95px;height:21.70px;background:#91c9f7;"></div>
<div style="position:absolute;top:439.43px;line-height:17px;font-size:12px;color:#000;white-space:pre;left:808.91px;transform-origin:0 50%;transform:scaleX(1.0093);">Follow</div>
<svg style="position:absolute;left:1036.04px;top:442.29px;" width="6" height="10" viewBox="0 0 6 10"><path d="M0.500 0.700l4.300 4l-4.300 4z" fill="#0a0a0a"/></svg>
<div style="position:absolute;left:804.61px;top:462.14px;width:247.28px;height:1.10px;background:#d4d4d4;"></div>
<div style="position:absolute;top:470.23px;line-height:17px;font-size:12px;color:#000;white-space:pre;left:808.91px;transform-origin:0 50%;transform:scaleX(0.9997);">Copy</div>
<svg style="position:absolute;left:1036.04px;top:473.09px;" width="6" height="10" viewBox="0 0 6 10"><path d="M0.500 0.700l4.300 4l-4.300 4z" fill="#0a0a0a"/></svg>
<div style="position:absolute;left:804.61px;top:492.94px;width:247.28px;height:1.10px;background:#d4d4d4;"></div>
<div style="position:absolute;top:501.03px;line-height:17px;font-size:12px;color:#000;white-space:pre;left:808.91px;transform-origin:0 50%;transform:scaleX(0.9734);">Protocol Preferences</div>
<svg style="position:absolute;left:1036.04px;top:503.89px;" width="6" height="10" viewBox="0 0 6 10"><path d="M0.500 0.700l4.300 4l-4.300 4z" fill="#0a0a0a"/></svg>
<div style="position:absolute;top:523.08px;line-height:17px;font-size:12px;color:#000;white-space:pre;left:808.91px;transform-origin:0 50%;transform:scaleX(0.9441);">Decode As...</div>
<div style="position:absolute;top:545.13px;line-height:17px;font-size:12px;color:#000;white-space:pre;left:808.91px;transform-origin:0 50%;transform:scaleX(0.9862);">Show Packet in New Window</div>
<div style="position:absolute;left:1049.31px;top:433.01px;width:240.03px;height:137.83px;background:#f0f0f0;border:1px solid #cfcfcf;"></div>
<div style="position:absolute;top:438.96px;line-height:17px;font-size:12px;color:#000;white-space:pre;left:1083.95px;transform-origin:0 50%;transform:scaleX(0.9204);">TCP Stream</div>
<div style="position:absolute;top:438.96px;line-height:17px;font-size:12px;color:#000;white-space:pre;left:1180.13px;transform-origin:0 50%;transform:scaleX(1.0474);">Ctrl+Alt+Shift+T</div>
<div style="position:absolute;top:461.01px;line-height:17px;font-size:12px;color:#6d6d6d;white-space:pre;left:1083.95px;transform-origin:0 50%;transform:scaleX(0.9386);">UDP Stream</div>
<div style="position:absolute;top:461.01px;line-height:17px;font-size:12px;color:#6d6d6d;white-space:pre;left:1180.13px;transform-origin:0 50%;transform:scaleX(1.0425);">Ctrl+Alt+Shift+U</div>
<div style="position:absolute;top:483.06px;line-height:17px;font-size:12px;color:#6d6d6d;white-space:pre;left:1083.95px;transform-origin:0 50%;transform:scaleX(0.9209);">TLS Stream</div>
<div style="position:absolute;top:483.06px;line-height:17px;font-size:12px;color:#6d6d6d;white-space:pre;left:1180.13px;transform-origin:0 50%;transform:scaleX(1.0318);">Ctrl+Alt+Shift+S</div>
<div style="position:absolute;left:1051.52px;top:502.46px;width:234.87px;height:21.60px;background:#91c9f7;"></div>
<div style="position:absolute;top:505.11px;line-height:17px;font-size:12px;color:#000;white-space:pre;left:1083.95px;transform-origin:0 50%;transform:scaleX(0.9575);">HTTP Stream</div>
<div style="position:absolute;top:505.11px;line-height:17px;font-size:12px;color:#000;white-space:pre;left:1180.13px;transform-origin:0 50%;transform:scaleX(1.0524);">Ctrl+Alt+Shift+H</div>
<div style="position:absolute;top:527.16px;line-height:17px;font-size:12px;color:#6d6d6d;white-space:pre;left:1083.95px;transform-origin:0 50%;transform:scaleX(0.9726);">HTTP/2 Stream</div>
<div style="position:absolute;top:549.21px;line-height:17px;font-size:12px;color:#6d6d6d;white-space:pre;left:1083.95px;transform-origin:0 50%;transform:scaleX(0.9382);">QUIC Stream</div>
</div></body></html>
